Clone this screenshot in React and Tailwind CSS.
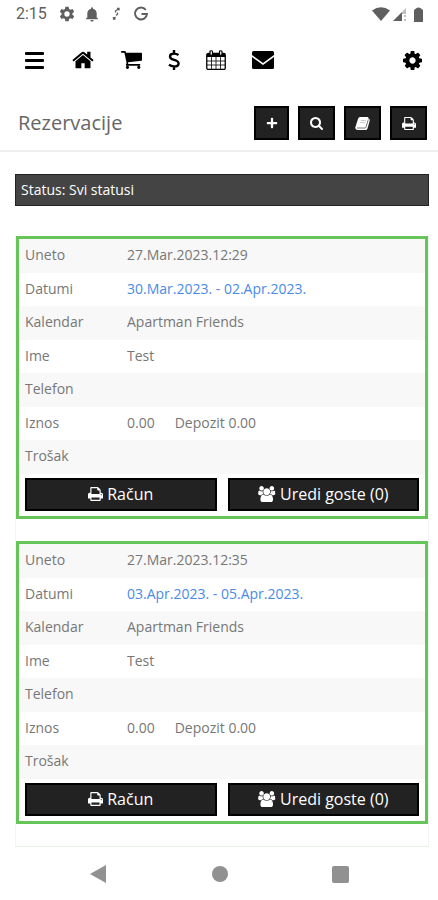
import { FaPlus } from 'react-icons/fa'

const ICONS = {
  home: {
    box: '0 128 1664 1536',
    d: 'M1408 992v480q0 26-19 45t-45 19h-384v-384h-256v384h-384q-26 0-45-19t-19-45v-480q0-1 .5-3t.5-3l575-474 575 474q1 2 1 6zm223-69l-62 74q-8 9-21 11h-3q-13 0-21-7l-692-577-692 577q-12 8-24 7-13-2-21-11l-62-74q-8-10-7-23.5t11-21.5l719-599q32-26 76-26t76 26l244 204v-195q0-14 9-23t23-9h192q14 0 23 9t9 23v408l219 182q10 8 11 21.5t-7 23.5z',
  },
  cart: {
    box: '0 256 1664 1408',
    d: 'M640 1536q0 52-38 90t-90 38-90-38-38-90 38-90 90-38 90 38 38 90zm896 0q0 52-38 90t-90 38-90-38-38-90 38-90 90-38 90 38 38 90zm128-1088v512q0 24-16.5 42.5t-40.5 21.5l-1044 122q13 60 13 70 0 16-24 64h920q26 0 45 19t19 45-19 45-45 19h-1024q-26 0-45-19t-19-45q0-11 8-31.5t16-36 21.5-40 15.5-29.5l-177-823h-204q-26 0-45-19t-19-45 19-45 45-19h256q16 0 28.5 6.5t19.5 15.5 13 24.5 8 26 5.5 29.5 4.5 26h1201q26 0 45 19t19 45z',
  },
  cog: {
    box: '128 128 1536 1536',
    d: 'M1152 896q0-106-75-181t-181-75-181 75-75 181 75 181 181 75 181-75 75-181zm512-109v222q0 12-8 23t-20 13l-185 28q-19 54-39 91 35 50 107 138 10 12 10 25t-9 23q-27 37-99 108t-94 71q-12 0-26-9l-138-108q-44 23-91 38-16 136-29 186-7 28-36 28h-222q-14 0-24.5-8.5t-11.5-21.5l-28-184q-49-16-90-37l-141 107q-10 9-25 9-14 0-25-11-126-114-165-168-7-10-7-23 0-12 8-23 15-21 51-66.5t54-70.5q-27-50-41-99l-183-27q-13-2-21-12.5t-8-23.5v-222q0-12 8-23t19-13l186-28q14-46 39-92-40-57-107-138-10-12-10-24 0-10 9-23 26-36 98.5-107.5t94.5-71.5q13 0 26 10l138 107q44-23 91-38 16-136 29-186 7-28 36-28h222q14 0 24.5 8.5t11.5 21.5l28 184q49 16 90 37l142-107q9-9 24-9 13 0 25 10 129 119 165 170 7 8 7 22 0 12-8 23-15 21-51 66.5t-54 70.5q26 50 41 98l183 28q13 2 21 12.5t8 23.5z',
  },
  search: {
    box: '0 0 1664 1664',
    d: 'M1152 704q0-185-131.5-316.5t-316.5-131.5-316.5 131.5-131.5 316.5 131.5 316.5 316.5 131.5 316.5-131.5 131.5-316.5zm512 832q0 52-38 90t-90 38q-54 0-90-38l-343-342q-179 124-399 124-143 0-273.5-55.5t-225-150-150-225-55.5-273.5 55.5-273.5 150-225 225-150 273.5-55.5 273.5 55.5 225 150 150 225 55.5 273.5q0 220-124 399l343 343q37 37 37 90z',
  },
  print: {
    box: '0 128 1664 1536',
    d: 'M384 1536h896v-256h-896v256zm0-640h896v-384h-160q-40 0-68-28t-28-68v-160h-640v640zm1152 64q0-26-19-45t-45-19-45 19-19 45 19 45 45 19 45-19 19-45zm128 0v416q0 13-9.5 22.5t-22.5 9.5h-224v160q0 40-28 68t-68 28h-960q-40 0-68-28t-28-68v-160h-224q-13 0-22.5-9.5t-9.5-22.5v-416q0-79 56.5-135.5t135.5-56.5h64v-544q0-40 28-68t68-28h672q40 0 88 20t76 48l152 152q28 28 48 76t20 88v256h64q79 0 135.5 56.5t56.5 135.5z',
  },
  users: {
    box: '-64 0 1984 1792',
    d: 'M529 896q-162 5-265 128h-134q-82 0-138-40.5t-56-118.5q0-353 124-353 6 0 43.5 21t97.5 42.5 119 21.5q67 0 133-23-5 37-5 66 0 139 81 256zm1071 637q0 120-73 189.5t-194 69.5h-874q-121 0-194-69.5t-73-189.5q0-53 3.5-103.5t14-109 26.5-108.5 43-97.5 62-81 85.5-53.5 111.5-20q10 0 43 21.5t73 48 107 48 135 21.5 135-21.5 107-48 73-48 43-21.5q61 0 111.5 20t85.5 53.5 62 81 43 97.5 26.5 108.5 14 109 3.5 103.5zm-1024-1277q0 106-75 181t-181 75-181-75-75-181 75-181 181-75 181 75 75 181zm704 384q0 159-112.5 271.5t-271.5 112.5-271.5-112.5-112.5-271.5 112.5-271.5 271.5-112.5 271.5 112.5 112.5 271.5zm576 225q0 78-56 118.5t-138 40.5h-134q-103-123-265-128 81-117 81-256 0-29-5-66 66 23 133 23 59 0 119-21.5t97.5-42.5 43.5-21q124 0 124 353zm-128-609q0 106-75 181t-181 75-181-75-75-181 75-181 181-75 181 75 75 181z',
  },
}

function Icon({ name, className }) {
  return (
    <svg viewBox={ICONS[name].box} className={className} fill="currentColor" aria-hidden="true">
      <path d={ICONS[name].d} />
    </svg>
  )
}

function BookIcon() {
  return (
    <svg viewBox="0 0 15 13" className="h-[13px] w-[15px]" aria-hidden="true">
      <path d="M5 0h7.500q1.300.2 1 1.500l1 .7q.5.600.2 1.500L12.500 11.500Q12 13 10.500 13H2.500Q.2 12.800.2 10.800L3 2Q3.500.2 5 0z" fill="currentColor" />
      <path d="M5.800 3.500h5M5.200 5.500h5" stroke="#bbb" strokeWidth=".8" />
      <path d="M13.300 2.500L11 10.300q-.3.700-1 .7H2" fill="none" stroke="#555" strokeWidth=".8" />
    </svg>
  )
}

function StatusBar() {
  return (
    <div className="flex h-7 items-center justify-between pl-4 pr-[15px] font-['Roboto',sans-serif] text-base text-[#5f5f5f]">
      <div className="flex items-center">
        <span className="w-[43px]">2:15</span>
        <svg viewBox="0 0 24 24" className="size-4" fill="currentColor" fillRule="evenodd">
          <path d="M9.500 1h5l.6 3.400 2 1.200 3.200-1.200 2.500 4.300-2.700 2.200v2.200l2.700 2.200-2.500 4.300-3.200-1.200-2 1.200-.6 3.400h-5l-.6-3.400-2-1.200-3.200 1.200-2.500-4.300 2.700-2.200v-2.200L1.200 8.700l2.500-4.300 3.200 1.200 2-1.200zM12 8a4 4 0 1 0 0 8 4 4 0 0 0 0-8z" />
        </svg>
        <svg viewBox="0 0 24 24" className="ml-[9px] size-4" fill="currentColor">
          <path d="M12 2q1.500 0 1.500 2Q19 5.500 19 11v6l2 2v1H3v-1l2-2v-6q0-5.500 5.500-7Q10.500 2 12 2zM9.500 21h5q-.5 2.500-2.500 2.500T9.500 21z" />
        </svg>
        <svg viewBox="0 0 16 16" className="ml-2 size-4" fill="none" stroke="currentColor" strokeWidth="1.300">
          <path d="M7.500 6.500V5L11 2.500M9 2.500h2v2M9.500 6.500v1.800L8 9.500M7.500 11L5.500 13M5.500 11v2h2" />
        </svg>
        <svg viewBox="0 0 16 16" className="ml-[9px] size-4" fill="none" stroke="currentColor" strokeWidth="2">
          <path d="M12.800 3.800A6 6 0 1 0 14 8H8.500" />
        </svg>
      </div>
      <div className="flex items-center">
        <svg viewBox="0 0 18 14" className="h-3.5 w-[18px]" fill="currentColor">
          <path d="M0 3.500Q9-3 18 3.500L9 14z" />
        </svg>
        <svg viewBox="0 0 14 14" className="ml-[3px] size-3.5" fill="currentColor">
          <path d="M0 14L9 5v9z" />
          <path d="M9 5l4-4v6H9zM11 8h2v2h-2zM11 12h2v2h-2z" opacity=".4" />
        </svg>
        <svg viewBox="0 0 9 15" className="ml-[7px] h-[15px] w-[9px]" fill="currentColor">
          <path d="M0 3l2-1.500Q4.500-.5 7 1.500L9 3v12H0z" />
        </svg>
      </div>
    </div>
  )
}

function MainNav() {
  return (
    <nav className="flex h-16 items-center pl-[25px] pr-4 text-black">
      <button type="button" aria-label="Meni">
        <svg viewBox="0 0 20 18" className="h-[18px] w-5" fill="currentColor">
          <rect x="0" y="1" width="19" height="3" rx="1" />
          <rect x="0" y="8" width="19" height="3" rx="1" />
          <rect x="0" y="15" width="19" height="3" rx="1" />
        </svg>
      </button>
      <a href="#home" aria-label="Početna" className="ml-[27px]">
        <Icon name="home" className="h-5 w-[22px]" />
      </a>
      <a href="#cart" aria-label="Prodaja" className="ml-[27px]">
        <Icon name="cart" className="h-[18px] w-[21px]" />
      </a>
      <a href="#finance" aria-label="Finansije" className="ml-[26px]">
        <svg viewBox="0 0 12 20" className="h-5 w-3" fill="none" stroke="currentColor" strokeWidth="2.400">
          <path d="M6 0v3.500M6 16.500V20M10.500 5Q8.500 3.600 6 3.600 2 3.600 2 6.400 2 8.800 6 9.800 10.600 11 10.600 13.400 10.600 16.400 6 16.400 3 16.400 1 14.600" />
        </svg>
      </a>
      <a href="#calendar" aria-label="Kalendar" className="ml-[26px]">
        <svg viewBox="0 0 20 20" className="size-5" fill="none" stroke="currentColor">
          <rect x=".75" y="3.500" width="18.500" height="16" rx="1.500" strokeWidth="1.300" />
          <path d="M1 5.500h18" strokeWidth="3" />
          <path d="M5.500 7v12M10 7v12M14.500 7v12M1 11h18M1 15h18" strokeWidth=".8" />
          <rect x="4" y=".75" width="2.500" height="4.500" rx="1" fill="white" strokeWidth="1.200" />
          <rect x="13.500" y=".75" width="2.500" height="4.500" rx="1" fill="white" strokeWidth="1.200" />
        </svg>
      </a>
      <a href="#messages" aria-label="Poruke" className="ml-[26px]">
        <svg viewBox="0 0 22 18" className="h-[18px] w-[22px]" fill="currentColor">
          <path d="M1.500 0h19Q22 0 22 1.500V4L11 12 0 4V1.500Q0 0 1.500 0z" />
          <path d="M0 6l11 8 11-8v10.500q0 1.500-1.500 1.500h-19Q0 18 0 16.500z" />
        </svg>
      </a>
      <button type="button" aria-label="Podešavanja" className="ml-auto">
        <Icon name="cog" className="size-[19px]" />
      </button>
    </nav>
  )
}

function ToolButton({ label, className = 'w-[37px]', children }) {
  return (
    <button
      type="button"
      aria-label={label}
      className={`flex h-[34px] items-center justify-center border-2 border-black bg-[#222] text-white ${className}`}
    >
      {children}
    </button>
  )
}

function PageHeader() {
  return (
    <header className="flex h-[60px] items-center justify-between border-b-2 border-[#eee] pl-[18px] pr-[11px] pt-1">
      <h1 className="text-xl font-normal text-[#666]">Rezervacije</h1>
      <div className="flex gap-[9px]">
        <ToolButton label="Dodaj" className="w-[35px]">
          <FaPlus className="size-3" />
        </ToolButton>
        <ToolButton label="Pretraga">
          <Icon name="search" className="size-[13px]" />
        </ToolButton>
        <ToolButton label="Knjiga">
          <BookIcon />
        </ToolButton>
        <ToolButton label="Štampaj">
          <Icon name="print" className="h-[13px] w-3.5" />
        </ToolButton>
      </div>
    </header>
  )
}

const reservations = [
  { id: 1, created: '27.Mar.2023.12:29', dates: '30.Mar.2023. - 02.Apr.2023.' },
  { id: 2, created: '27.Mar.2023.12:35', dates: '03.Apr.2023. - 05.Apr.2023.' },
]

function Row({ label, children }) {
  return (
    <tr className="h-[33px] odd:h-[34px] odd:bg-[#f8f8f8]">
      <th scope="row" className="w-[108px] pb-0.5 pl-[6px] text-left font-normal">{label}</th>
      <td className="pb-0.5">{children}</td>
    </tr>
  )
}

function ReservationCard({ reservation }) {
  const actionClass =
    'flex h-[33px] flex-1 items-center justify-center gap-1 border-2 border-black bg-[#222] pb-0.5 text-base text-white'

  return (
    <article className="border-3 border-[#65c558] pb-[5px]">
      <table className="w-full table-fixed border-collapse text-sm text-[#777]">
        <tbody>
          <Row label="Uneto">{reservation.created}</Row>
          <Row label="Datumi">
            <a href={`#reservation-${reservation.id}`} className="text-[#4a8ae8]">{reservation.dates}</a>
          </Row>
          <Row label="Kalendar">Apartman Friends</Row>
          <Row label="Ime">Test</Row>
          <Row label="Telefon" />
          <Row label="Iznos">
            <span className="mr-5">0.00</span>
            <span>Depozit 0.00</span>
          </Row>
          <Row label="Trošak" />
        </tbody>
      </table>
      <div className="mt-1 flex gap-[11px] px-[6px]">
        <button type="button" className={actionClass}>
          <Icon name="print" className="h-3.5 w-[15px]" />
          Račun
        </button>
        <button type="button" className={actionClass}>
          <Icon name="users" className="h-4 w-[18px]" />
          Uredi goste (0)
        </button>
      </div>
    </article>
  )
}

function SystemNav() {
  return (
    <div className="flex h-[54px] items-center justify-between pl-[89px] pr-[89px] text-[#919191]">
      <button type="button" aria-label="Nazad">
        <svg viewBox="0 0 18 18" className="size-[18px]" fill="currentColor">
          <path d="M17 0v18L1 9z" />
        </svg>
      </button>
      <button type="button" aria-label="Početni ekran" className="size-4 rounded-full bg-[#919191]" />
      <button type="button" aria-label="Pregled" className="size-[17px] rounded-xs bg-[#919191]" />
    </div>
  )
}

function App() {
  return (
    <div className="bg-white font-['Open_Sans','Noto_Sans',sans-serif]">
      <StatusBar />
      <MainNav />
      <PageHeader />
      <main className="ml-[15px] mr-[9px] pt-[22px]">
        <button
          type="button"
          className="block h-8 w-full border border-[#222] bg-[#444] px-[5px] text-left text-sm text-white"
        >
          Status: Svi statusi
        </button>
        <div className="mt-[30px] flex flex-col gap-[22px] border-x border-b border-x-[#f2f5f2] border-b-[#e4f3e2] pb-[22px]">
          {reservations.map((reservation) => (
            <ReservationCard key={reservation.id} reservation={reservation} />
          ))}
        </div>
      </main>
      <SystemNav />
    </div>
  )
}

export default App
